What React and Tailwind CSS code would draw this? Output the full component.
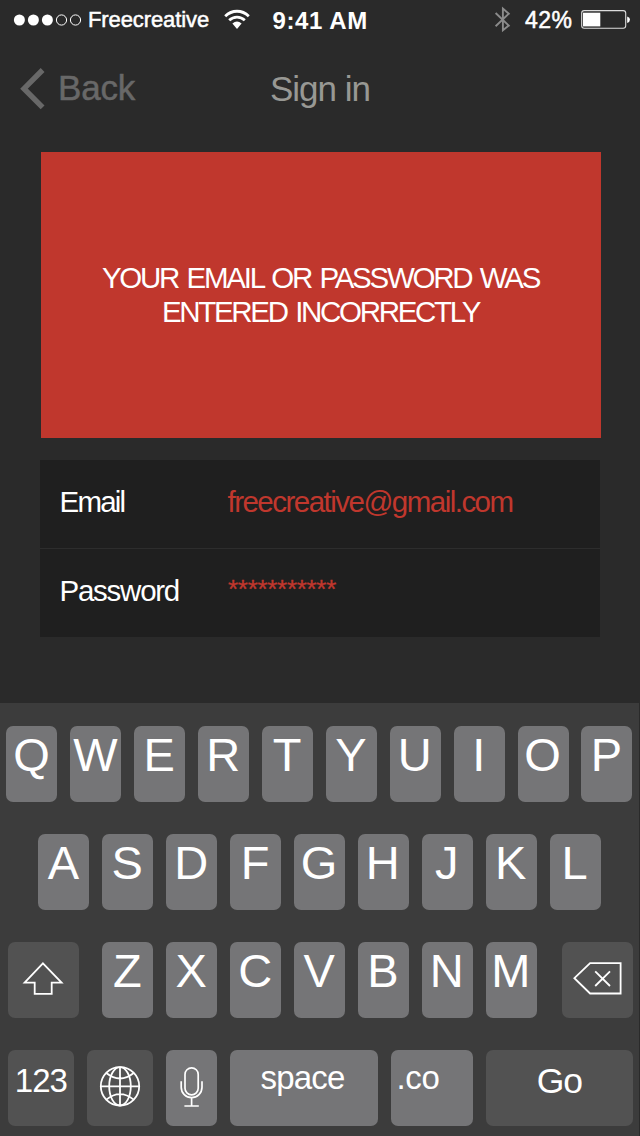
const keyBase = "flex h-[76px] shrink-0 justify-center rounded-[7px] text-white";

function LetterKey({ letter }) {
  return (
    <div className={`${keyBase} w-[51px] bg-[#757577] pr-px pt-[4.5px] text-[47px] leading-none`}>
      <span>{letter}</span>
    </div>
  );
}

function KeyRow({ letters }) {
  return (
    <div className="flex gap-[12.9px]">
      {letters.split("").map((letter) => (
        <LetterKey key={letter} letter={letter} />
      ))}
    </div>
  );
}

function StatusBar() {
  return (
    <header className="flex h-10 items-start text-[22px] leading-none text-white">
      <svg className="ml-[13px] mt-[13px] h-[14px] w-[70px] shrink-0" viewBox="0 0 70 14">
        <g fill="#fff">
          <circle cx="6.4" cy="7" r="5.5" />
          <circle cx="20.4" cy="7" r="5.5" />
          <circle cx="34.4" cy="7" r="5.5" />
        </g>
        <g fill="none" stroke="#fff" strokeWidth="1">
          <circle cx="48.5" cy="7" r="5.1" />
          <circle cx="62.5" cy="7" r="5.1" />
        </g>
      </svg>
      <span className="ml-[5px] mt-[9px] w-[122px] whitespace-nowrap tracking-[-0.1px] [-webkit-text-stroke:0.5px_white]">Freecreative</span>
      <svg className="ml-[14px] mt-[9px] h-[21px] w-[27px] shrink-0" viewBox="0 0 27 21">
        <g fill="none" stroke="#fff" strokeWidth="2.8">
          <path d="M1.2 7.2C8 .6 18 .6 24.8 7.2" />
          <path d="M5.2 11.2C9.7 7 16.3 7 20.8 11.2" />
        </g>
        <path d="M8.4 14.4Q13 10.7 17.6 14.4L13 20Z" fill="#fff" />
      </svg>
      <span className="ml-[21.5px] mt-[9px] w-[109.5px] whitespace-nowrap text-[24px] font-bold tracking-[0.6px]">9:41 AM</span>
      <svg className="ml-[112px] mt-[6px] h-[27px] w-[17px] shrink-0" viewBox="0 0 17 27">
        <path d="M1.6 7 14.8 19.6 8.9 24.3V2.5L14.8 7.7 1.6 20.2" fill="none" stroke="#8b8b8b" strokeWidth="1.9" />
      </svg>
      <span className="ml-[14px] mt-[9px] w-[50px] whitespace-nowrap text-[23px] tracking-[0.4px] [-webkit-text-stroke:0.5px_white]">42%</span>
      <svg className="ml-[6px] mt-[9px] h-[22px] w-[50px] shrink-0" viewBox="0 0 50 22">
        <rect x="0.7" y="1.6" width="44" height="17.6" rx="2.5" fill="none" stroke="#ddd" strokeWidth="1.1" />
        <rect x="2" y="3.7" width="17.3" height="13.7" fill="#fff" />
        <path d="M46.2 7.4Q49 8.3 49 10.6 49 13 46.2 13.9Z" fill="#fff" />
      </svg>
    </header>
  );
}

export default function App() {
  return (
    <div className="flex h-[1136px] w-[640px] flex-col overflow-hidden bg-[#2a2a2a] font-['Liberation_Sans',Arial,sans-serif]">
      <StatusBar />

      <nav className="flex h-28 items-start text-[35px] leading-none">
        <svg className="ml-5 mt-7 h-[42px] w-[25px] shrink-0" viewBox="0 0 25 42">
          <path d="M22.6 2 4 20.7 22.6 39.3" fill="none" stroke="#686868" strokeWidth="5.4" />
        </svg>
        <span className="ml-[13px] mt-[30px] w-[90px] tracking-[-0.2px] text-[#686868] [-webkit-text-stroke:0.5px_#686868]">Back</span>
        <span className="ml-[122px] mt-[31px] whitespace-nowrap tracking-[-1px] text-[#989894]">Sign in</span>
      </nav>

      <section className="ml-[41px] flex h-[286px] w-[560px] shrink-0 flex-col items-center bg-[#c0372d] pr-px pt-[109px] text-center text-[29.5px] leading-[34px] text-white [word-spacing:2.5px]">
        <p className="whitespace-nowrap tracking-[-2.25px]">YOUR EMAIL OR PASSWORD WAS</p>
        <p className="whitespace-nowrap tracking-[-2.3px]">ENTERED INCORRECTLY</p>
      </section>

      <form className="ml-10 mt-[22px] flex h-[177px] w-[560px] shrink-0 flex-col bg-[#1f1f1f] text-[29.5px] leading-none">
        <div className="flex h-[89px] items-start border-b border-[#2d2d2d] pl-[19.5px] pt-[27px]">
          <span className="w-[168px] tracking-[-1.8px] text-white">Email</span>
          <span className="tracking-[-1.52px] text-[#c0372d]">freecreative@gmail.com</span>
        </div>
        <div className="flex h-[88px] items-start pl-[19.5px] pt-[27px]">
          <span className="w-[168.5px] tracking-[-1.25px] text-white">Password</span>
          <span className="text-[26px] tracking-[-0.3px] text-[#c0372d] [-webkit-text-stroke:0.3px_#c0372d]">***********</span>
        </div>
      </form>

      <main className="mt-[66px] flex h-[433px] w-[639px] shrink-0 flex-col gap-8 bg-[#3c3c3c] pt-[23px]">
        <div className="pl-[6.45px]">
          <KeyRow letters="QWERTYUIOP" />
        </div>
        <div className="pl-[38.4px]">
          <KeyRow letters="ASDFGHJKL" />
        </div>
        <div className="flex pl-[8.4px]">
          <div className={`${keyBase} mr-[23px] w-[71px] items-center bg-[#525252]`}>
            <svg className="-mt-0.5 mr-[2px] h-[36px] w-[44px]" viewBox="0 0 44 36">
              <path d="M21.9 2.3 3.6 21.7H13.7V32.8H30.7V21.7H40.6Z" fill="none" stroke="#fff" strokeWidth="1.8" />
            </svg>
          </div>
          <KeyRow letters="ZXCVBNM" />
          <div className={`${keyBase} ml-[24.8px] w-[71px] items-center bg-[#525252]`}>
            <svg className="h-[36px] w-[50px]" viewBox="0 0 50 36">
              <path d="M2.4 16.2 18.1 1.2H48.6V31.5H18.1ZM23.2 9.3 38 24M38 9.3 23.2 24" fill="none" stroke="#fff" strokeWidth="1.8" />
            </svg>
          </div>
        </div>
        <div className="flex gap-[12.9px] pl-[8.4px] leading-none">
          <div className={`${keyBase} w-[66px] bg-[#525252] pr-px pt-[14px] text-[33px] tracking-[-1px]`}>123</div>
          <div className={`${keyBase} w-[66px] bg-[#525252] pt-[15px]`}>
            <svg className="h-[42px] w-[42px]" viewBox="0 0 42 42" fill="none" stroke="#fff" strokeWidth="1.8">
              <circle cx="21" cy="21.3" r="19.2" />
              <path d="M21 2.1V40.5M1.8 21.3H40.2M7.3 8Q21 19 34.7 8M7.3 34.6Q21 23.6 34.7 34.6" />
              <ellipse cx="21" cy="21.3" rx="10.8" ry="19.2" />
            </svg>
          </div>
          <div className={`${keyBase} w-[51px] bg-[#757577] pt-4`}>
            <svg className="h-[42px] w-[24px]" viewBox="0 0 24 42" fill="none" stroke="#fff" strokeWidth="1.7">
              <rect x="5" y="1.8" width="13.2" height="27" rx="6.6" />
              <path d="M1.2 15.2V21.2A10.4 10.4 0 0 0 22 21.2V15.2M11.6 32V40M4.4 40H18.8" />
            </svg>
          </div>
          <div className={`${keyBase} w-[148px] bg-[#757577] pr-[3px] pt-[11px] text-[33px] tracking-[-0.8px]`}>space</div>
          <div className={`${keyBase} w-[82px] bg-[#757577] pr-7 pt-[11px] text-[33px] tracking-[-0.4px]`}>.co</div>
          <div className={`${keyBase} w-[147px] bg-[#525252] pt-[13.5px] text-[35.5px] tracking-[-1.2px]`}>Go</div>
        </div>
      </main>
    </div>
  );
}
